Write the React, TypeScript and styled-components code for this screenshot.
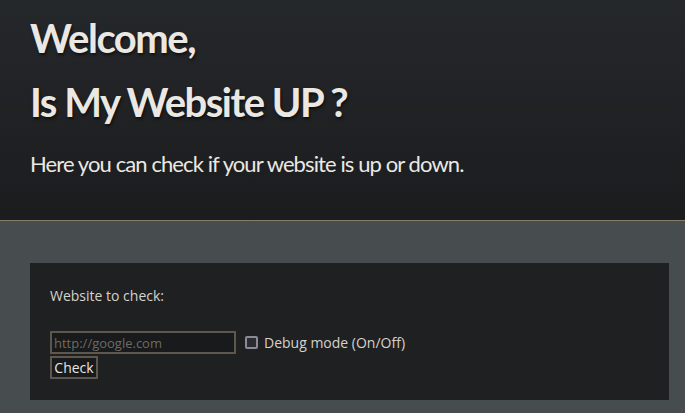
import styled, { createGlobalStyle } from 'styled-components';

const GlobalStyle = createGlobalStyle`
  html, body {
    margin: 0;
    padding: 0;
    background: #474c4f;
    font-family: Lato, "Liberation Sans", sans-serif;
  }
`;

const Header = styled.header`
  height: 221px;
  box-sizing: border-box;
  padding: 6px 30px 0;
  background: linear-gradient(to bottom, #25282b, #1b1c1e);
  border-bottom: 1px solid #8a7c66;
  color: #ebe8e3;
`;

const Title = styled.h1`
  margin: 0;
  font-size: 40px;
  font-weight: 700;
  letter-spacing: -1.5px;
  line-height: 64px;
  text-shadow: 1px 2px 3px rgba(0, 0, 0, 0.6);
`;

const Subtitle = styled.p`
  margin: 16px 0 0;
  font-size: 22px;
  font-weight: 400;
  letter-spacing: -0.9px;
  line-height: 28px;
`;

const Main = styled.main`
  padding: 42px 16px 12px 30px;
`;

const Card = styled.section`
  background: #1f2022;
  padding: 23px 20px 21px;
  color: #d5d2cc;
  font-family: "Open Sans", sans-serif;
  font-size: 14px;
`;

const Label = styled.div`
  line-height: 20px;
  margin-bottom: 25px;
`;

const Row = styled.div`
  display: flex;
  align-items: center;
  gap: 9px;
`;

const UrlInput = styled.input`
  width: 186px;
  height: 23px;
  box-sizing: border-box;
  background: #181a1b;
  border: 2px solid #5e574d;
  color: #d5d2cc;
  font: 13px "Open Sans", sans-serif;
  padding: 0 2px;
  &::placeholder {
    color: #6d6a64;
  }
`;

const Check = styled.label`
  display: flex;
  align-items: center;
  gap: 6px;
`;

const Box = styled.span`
  width: 9px;
  height: 9px;
  border: 2px solid #8c8a96;
  border-radius: 2px;
  background: #2a2c31;
`;

const Button = styled.button`
  display: block;
  margin-top: 2px;
  width: 48px;
  height: 23px;
  padding: 0;
  background: #181a1b;
  border: 2px solid #5e574d;
  color: #e8e6e3;
  font: 14px "Open Sans", sans-serif;
`;

export default function App() {
  return (
    <>
      <GlobalStyle />
      <Header>
        <Title>Welcome,</Title>
        <Title>Is My Website UP ?</Title>
        <Subtitle>Here you can check if your website is up or down.</Subtitle>
      </Header>
      <Main>
        <Card>
          <Label>Website to check:</Label>
          <Row>
            <UrlInput placeholder="http://google.com" />
            <Check>
              <Box />
              Debug mode (On/Off)
            </Check>
          </Row>
          <Button>Check</Button>
        </Card>
      </Main>
    </>
  );
}
